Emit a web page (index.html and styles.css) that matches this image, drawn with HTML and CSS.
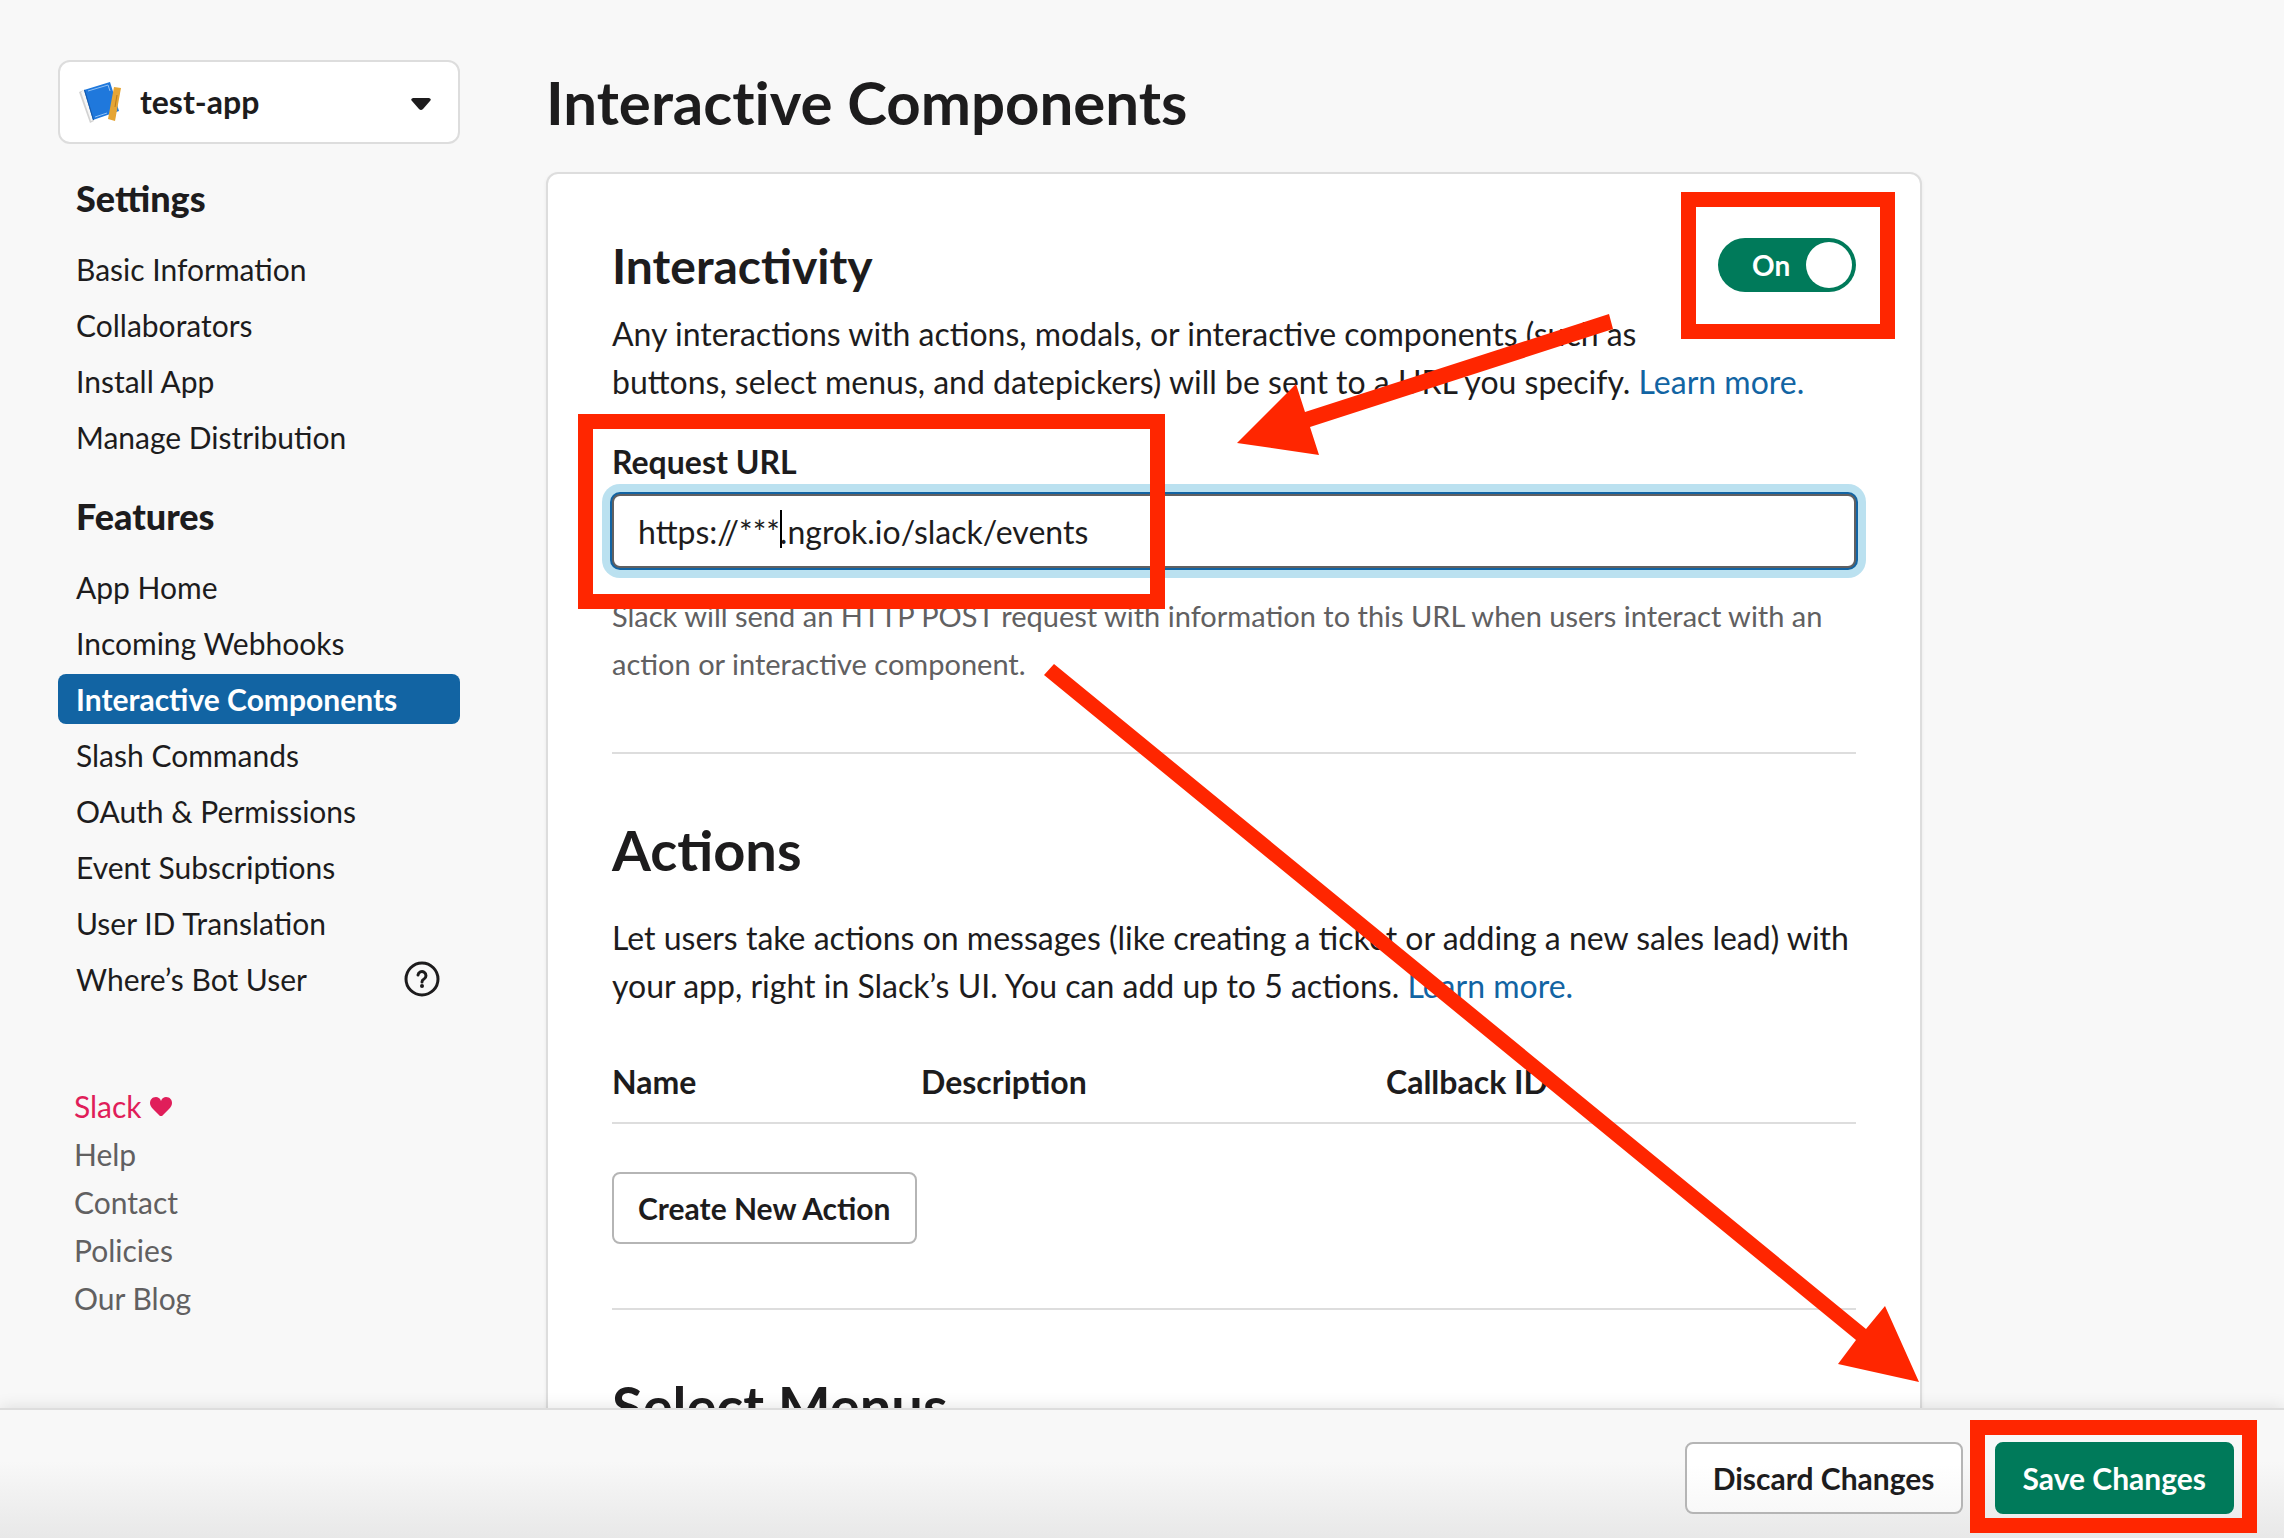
FILE: index.html
```html
<!DOCTYPE html>
<html lang="en">
<head>
<meta charset="utf-8">
<title>Interactive Components</title>
<link rel="stylesheet" href="styles.css">
</head>
<body>
<div class="shell">
  <div class="page">
    <aside class="sidebar">
      <div class="app-picker">
        <svg class="app-icon" viewBox="0 0 44 44" aria-hidden="true">
          <path d="M1 12l5-2 10 31-4 2z" fill="#d2d2d2"/>
          <path d="M3 12l3-2 9 30-2 1z" fill="#f6f6f6"/>
          <path d="M6 10L32 2l9 29-26 9z" fill="#1f78dc"/>
          <path d="M6 10l1-.3L16 40l-1 0z" fill="#1457a8"/>
          <path d="M10 11l20-6 2 6M17 37l12-4M37 31l2-1" fill="none" stroke="#8fc0f5" stroke-width="1"/>
          <path d="M36 7l7 1-6 33-7-2z" fill="#e5a535"/>
          <path d="M39 15l-2 12" stroke="#b97c1c" stroke-width="1"/>
        </svg>
        <select class="app-select" aria-label="App"><option>test-app</option></select>
        <svg class="app-caret" viewBox="0 0 20 12" aria-hidden="true"><path d="M2 0h16q3 1 1 3l-7 8q-2 2-4 0L1 3q-2-2 1-3z" fill="#1d1c1d"/></svg>
      </div>
      <nav class="nav" aria-label="App settings">
        <h2 class="nav-title">Settings</h2>
        <a class="nav-link" href="#">Basic Information</a>
        <a class="nav-link" href="#">Collaborators</a>
        <a class="nav-link" href="#">Install App</a>
        <a class="nav-link" href="#">Manage Distribution</a>
        <h2 class="nav-title">Features</h2>
        <a class="nav-link" href="#">App Home</a>
        <a class="nav-link" href="#">Incoming Webhooks</a>
        <a class="nav-link nav-link-active" href="#" aria-current="page">Interactive Components</a>
        <a class="nav-link" href="#">Slash Commands</a>
        <a class="nav-link" href="#">OAuth &amp; Permissions</a>
        <a class="nav-link" href="#">Event Subscriptions</a>
        <a class="nav-link" href="#">User ID Translation</a>
        <a class="nav-link" href="#">Where’s Bot User
          <svg class="help-icon" viewBox="0 0 36 36" fill="none" stroke="#1d1c1d" aria-hidden="true">
            <circle cx="18" cy="18" r="16" stroke-width="3"/>
            <path d="M14 14a4 4 0 1 1 6 4q-2 1-2 3" stroke-width="3" stroke-linecap="round"/>
            <circle cx="18" cy="25" r="2" fill="#1d1c1d" stroke="none"/>
          </svg>
        </a>
      </nav>
      <nav class="links" aria-label="Slack">
        <a class="link-love" href="#">Slack
          <svg class="heart" viewBox="0 0 22 19" aria-hidden="true"><path d="M11 4C12 1 14 0 16 0c4 0 6 3 6 6 0 2-1 4-3 6l-7 7h-2l-7-7C1 10 0 8 0 6c0-3 2-6 6-6 2 0 4 1 5 4z" fill="#e01e5a"/></svg>
        </a>
        <a href="#">Help</a>
        <a href="#">Contact</a>
        <a href="#">Policies</a>
        <a href="#">Our Blog</a>
      </nav>
    </aside>
    <main class="main">
      <h1 class="title">Interactive Components</h1>
      <div class="card">
        <section class="section">
          <div class="section-head">
            <h2 class="subheading">Interactivity</h2>
            <div class="toggle-wrap">
              <label class="toggle"><input class="toggle-input" type="checkbox" checked><span>On</span></label>
              <span class="callout callout-toggle"></span>
            </div>
          </div>
          <p class="text">Any interactions with actions, modals, or interactive components (such as<br>buttons, select menus, and datepickers) will be sent to a URL you specify. <a href="#">Learn more.</a></p>
          <div class="field">
            <label class="label" for="url">Request URL</label>
            <input class="input" id="url" type="text" value="https://***.ngrok.io/slack/events">
            <span class="text-cursor"></span>
            <span class="callout callout-field"></span>
          </div>
          <p class="hint">Slack will send an HTTP POST request with information to this URL when users interact with an action or interactive component.</p>
        </section>
        <section class="section">
          <h2 class="heading">Actions</h2>
          <p class="text">Let users take actions on messages (like creating a ticket or adding a new sales lead) with your app, right in Slack’s UI. You can add up to 5 actions. <a href="#">Learn more.</a></p>
          <table class="table">
            <thead><tr><th class="col-name">Name</th><th class="col-desc">Description</th><th>Callback ID</th></tr></thead>
          </table>
          <button class="button" type="button">Create New Action</button>
        </section>
        <section class="section">
          <h2 class="heading">Select Menus</h2>
        </section>
        <svg class="arrows" viewBox="0 0 1376 1236" aria-hidden="true">
          <path d="M1063 142l4 15-303 98 9 28-82-12 59-59 9 28z"/>
          <path d="M508 492l812 665 19-23 34 76-81-18 18-24-812-665z"/>
        </svg>
      </div>
    </main>
  </div>
  <footer class="savebar">
    <button class="button" type="button">Discard Changes</button>
    <div class="save-wrap">
      <button class="button button-primary" type="button">Save Changes</button>
      <span class="callout callout-save"></span>
    </div>
  </footer>
</div>
</body>
</html>
```
FILE: styles.css
```css
* { box-sizing: border-box; }
body {
  margin: 0;
  background: #f8f8f8;
  color: #1d1c1d;
  font: 400 32px/48px Lato, sans-serif;
}
h1, h2, p { margin: 0; }
a { color: #1264a3; text-decoration: none; }

.shell { display: flex; flex-direction: column; height: 100vh; }
.page {
  flex: 1;
  min-height: 0;
  overflow: auto;
  scrollbar-width: none;
  display: flex;
  align-items: flex-start;
  gap: 86px;
  padding: 60px 58px 0;
}

.sidebar { flex: 0 0 402px; font-size: 30px; }
.app-picker { position: relative; }
.app-select {
  appearance: none;
  display: block;
  width: 100%;
  height: 84px;
  padding: 0 60px 0 80px;
  border: 2px solid #ddd;
  border-radius: 12px;
  background: #fff;
  color: #1d1c1d;
  font: 700 32px/48px Lato, sans-serif;
}
.app-icon { position: absolute; left: 20px; top: 20px; width: 44px; height: 44px; }
.app-caret { position: absolute; right: 29px; top: 38px; width: 20px; height: 12px; }

.nav { display: flex; flex-direction: column; gap: 6px; padding-top: 26px; }
.nav-title { padding: 4px 18px 16px; font-size: 36px; line-height: 48px; font-weight: 900; }
.nav-link + .nav-title { padding-top: 24px; }
.nav-link {
  display: flex;
  justify-content: space-between;
  align-items: center;
  padding: 0 20px 0 18px;
  border-radius: 8px;
  color: #1d1c1d;
  line-height: 50px;
}
.nav-link-active { background: #1264a3; color: #fff; font-weight: 700; }
.help-icon { width: 36px; height: 36px; }

.links { display: flex; flex-direction: column; padding: 78px 16px 0; }
.links a { color: #616061; }
.links .link-love { display: flex; align-items: center; gap: 8px; color: #e01e5a; }
.heart { width: 22px; height: 19px; }

.main { flex: 0 1 1376px; }
.title {
  margin-bottom: 28px;
  font-size: 60px;
  line-height: 84px;
  font-weight: 700;
  font-variant-ligatures: none;
}
.card {
  position: relative;
  padding: 0 64px;
  border: 2px solid #ddd;
  border-radius: 12px;
  background: #fff;
  box-shadow: 0 2px 4px rgba(0, 0, 0, 0.06);
}
.section { padding: 64px 0; border-bottom: 2px solid #ddd; }
.section:last-of-type { border-bottom: 0; }
.section-head { display: flex; justify-content: space-between; align-items: flex-start; margin-bottom: 16px; }
.subheading { font-size: 48px; line-height: 56px; }
.heading { font-size: 56px; line-height: 64px; margin-bottom: 32px; }

.toggle-wrap, .field, .save-wrap { position: relative; }
.toggle {
  display: flex;
  align-items: center;
  width: 138px;
  height: 54px;
  padding-left: 34px;
  border-radius: 27px;
  background: #007a5a;
  color: #fff;
  font-size: 28px;
  font-weight: 700;
}
.toggle-input {
  appearance: none;
  order: 1;
  width: 46px;
  height: 46px;
  margin: 0 4px 0 auto;
  border-radius: 50%;
  background: #fff;
}

.field { display: flex; flex-direction: column; margin-top: 32px; }
.label { font-weight: 700; margin-bottom: 8px; }
.input {
  height: 74px;
  padding: 0 24px;
  border: 2px solid #616061;
  border-radius: 8px;
  outline: 0;
  box-shadow: 0 0 0 2px #1264a3, 0 0 0 10px #bbe1f0;
  color: #1d1c1d;
  font: 400 32px/48px Lato, sans-serif;
}
.text-cursor { position: absolute; left: 168px; bottom: 20px; width: 2px; height: 38px; background: #000; }
.hint { margin-top: 24px; font-size: 29px; color: #616061; }

.table { width: 100%; margin: 48px 0; border-collapse: collapse; table-layout: fixed; }
.table th { padding: 0 0 16px; border-bottom: 2px solid #ddd; text-align: left; font-weight: 700; }
.table .col-name { width: 309px; }
.table .col-desc { width: 465px; }

.button {
  height: 72px;
  padding: 0 24px;
  border: 2px solid #b5b5b5;
  border-radius: 8px;
  background: #fff;
  color: #1d1c1d;
  font: 700 30px/48px Lato, sans-serif;
}
.savebar .button { padding: 0 26px; background: linear-gradient(#fff 30%, #f8f8f8); }
.savebar .button-primary { border-color: #007a5a; background: #007a5a; color: #fff; }

.savebar {
  position: relative;
  display: flex;
  justify-content: flex-end;
  gap: 32px;
  padding: 32px 50px 24px;
  border-top: 2px solid #ddd;
  background: linear-gradient(#f8f8f8 40%, #e8e8e8);
  box-shadow: 0 0 16px rgba(0, 0, 0, 0.12);
}

.callout { position: absolute; border: 15px solid #ff2600; pointer-events: none; }
.callout-toggle { inset: -46px -39px -47px -37px; }
.callout-field { left: -34px; top: -24px; bottom: -41px; width: 587px; }
.callout-save { inset: -22px -23px -19px -25px; }
.arrows {
  position: absolute;
  left: -2px;
  top: -2px;
  width: 1376px;
  height: 1236px;
  fill: #ff2600;
  pointer-events: none;
}
```
